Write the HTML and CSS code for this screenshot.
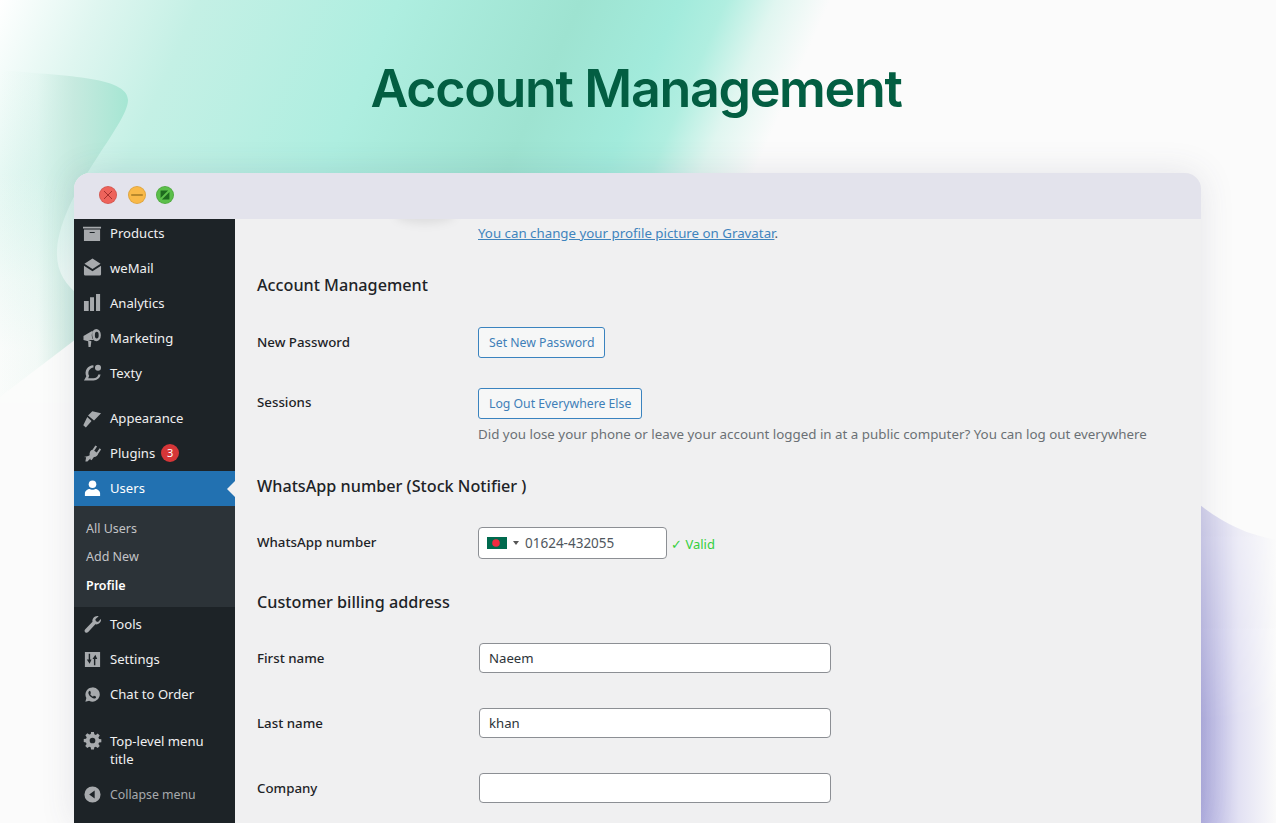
FILE: index.html
```html
<!DOCTYPE html>
<html lang="en">

<head>
    <meta charset="UTF-8">
    <meta name="viewport" content="width=device-width, initial-scale=1.0">
    <title>Account Management</title>
    <link rel="stylesheet" href="styles.css">
</head>

<body>
    <svg class="backdrop" viewBox="0 0 1276 823" preserveAspectRatio="none" aria-hidden="true">
        <defs>
            <linearGradient id="tealBand" gradientUnits="userSpaceOnUse" x1="0" y1="0" x2="695" y2="307">
                <stop offset="0" stop-color="#ffffff" />
                <stop offset="0.12" stop-color="#dff6f0" />
                <stop offset="0.24" stop-color="#c4f0e5" />
                <stop offset="0.48" stop-color="#aeeee0" />
                <stop offset="0.7" stop-color="#9ee3d1" />
                <stop offset="0.82" stop-color="#a2ebdc" />
                <stop offset="0.875" stop-color="#b0eee0" />
                <stop offset="0.935" stop-color="#e0f6f0" />
                <stop offset="1" stop-color="#fbfbfb" />
            </linearGradient>
            <linearGradient id="fadeLeft" gradientUnits="userSpaceOnUse" x1="0" y1="173" x2="0" y2="350">
                <stop offset="0" stop-color="#fbfcfb" stop-opacity="0" />
                <stop offset="0.6" stop-color="#fbfcfb" stop-opacity="0.72" />
                <stop offset="1" stop-color="#fbfcfb" stop-opacity="0.96" />
            </linearGradient>
            <linearGradient id="wave" gradientUnits="userSpaceOnUse" x1="0" y1="0" x2="128" y2="0">
                <stop offset="0" stop-color="#c4e8dc" stop-opacity="0" />
                <stop offset="0.29" stop-color="#c4e8dc" stop-opacity="0.12" />
                <stop offset="0.58" stop-color="#bfe6da" stop-opacity="0.75" />
                <stop offset="1" stop-color="#a5e6d3" />
            </linearGradient>
            <linearGradient id="violet" gradientUnits="userSpaceOnUse" x1="1201" y1="0" x2="1276" y2="0">
                <stop offset="0" stop-color="#b0aee0" />
                <stop offset="0.5" stop-color="#e2e1f3" />
                <stop offset="1" stop-color="#fafafa" />
            </linearGradient>
            <linearGradient id="violetV" gradientUnits="userSpaceOnUse" x1="0" y1="505" x2="0" y2="720">
                <stop offset="0" stop-color="#888888" />
                <stop offset="1" stop-color="#ffffff" />
            </linearGradient>
            <mask id="violetFade">
                <rect x="1200" y="500" width="76" height="323" fill="url(#violetV)" />
            </mask>
        </defs>
        <path d="M0 0H830V173L760 340H74L0 397Z" fill="url(#tealBand)" />
        <rect x="0" y="173" width="74" height="230" fill="url(#fadeLeft)" />
        <path d="M0 70C60 76 128 76 128 100C128 125 62 190 57 250C56 270 64 284 80 296V336L0 397Z" fill="url(#wave)" />
        <path d="M1200 505C1225 525 1250 535 1276 540V823H1200Z" fill="url(#violet)" mask="url(#violetFade)" />
    </svg>

    <h1 class="page-title">Account Management</h1>

    <div class="window">
        <div class="titlebar">
            <span class="dot dot-close">
                <svg viewBox="0 0 18 18"><path d="M4.500 4.500l9 9M13.500 4.500l-9 9" stroke="#9c2a26" stroke-width="1" /></svg>
            </span>
            <span class="dot dot-min">
                <svg viewBox="0 0 18 18"><path d="M2.500 9h13" stroke="#7a5a10" stroke-width="1.400" /></svg>
            </span>
            <span class="dot dot-max">
                <svg viewBox="0 0 18 18"><path d="M4 4h8.500L4 12.500zM14 5.500V14H5.500z" fill="#1d6a1e" /></svg>
            </span>
        </div>

        <div class="window-body">
            <nav class="sidebar">
                <ul class="menu">
                    <li class="menu-item">
                        <svg class="icon" viewBox="0 0 20 20"><path d="M0 4h19v1.800H0zM1 6.800h17V19H1zM7 9.500v1.100h5.300V9.500z" fill-rule="evenodd" /></svg>
                        Products
                    </li>
                    <li class="menu-item">
                        <svg class="icon" viewBox="0 0 20 20"><path d="M10 .500l8.500 5.500L10 11.500 1.500 6zM1 8.200l9 5.800 9-5.800V17a1.500 1.500 0 0 1-1.500 1.500h-15A1.500 1.500 0 0 1 1 17z" /></svg>
                        weMail
                    </li>
                    <li class="menu-item">
                        <svg class="icon" viewBox="0 0 20 20"><path d="M1 8.500h5V19H1zM7.400 4.500h4.200V19H7.400zM13.700 1H18v18h-4.300z" /></svg>
                        Analytics
                    </li>
                    <li class="menu-item">
                        <svg class="icon" viewBox="0 0 20 20"><path d="M.5 8.500L10 3c-.7 3-.4 6.500 1 9.500L5.500 12.500 8.800 14l-.8 6H5.800l-.4-6-4.900-1.500zM14 1a4.800 6.500 0 1 1 0 13 4.800 6.500 0 0 1 0-13zM14.500 4a2 3.500 0 1 0 0 7 2 3.500 0 0 0 0-7z" fill-rule="evenodd" /></svg>
                        Marketing
                    </li>
                    <li class="menu-item menu-item-last">
                        <svg class="icon" viewBox="0 0 20 20"><path d="M11 2.500A8 8 0 0 0 3.500 14L1 18.500h10a7.500 7.500 0 0 0 7.500-6.500h-2.400A5.300 5.300 0 0 1 11 16H5.500l1-2.500A5.700 5.700 0 0 1 11 4.800z" /><circle cx="15.800" cy="5" r="3.200" /></svg>
                        Texty
                    </li>
                    <li class="menu-item">
                        <svg class="icon" viewBox="0 0 20 20"><path d="M9.800 2.300L19 4.400 11.600 12 5.300 6.800zM4.500 8.500L9 12.500 3 19.500 .3 17z" /></svg>
                        Appearance
                    </li>
                    <li class="menu-item">
                        <svg class="icon" viewBox="0 0 20 20"><path d="M13 1.500l1.800 1.200-3 4.300 2.700 1.900 3-4.300 1.500 1.200-3 4.500c-.5 2-2.500 3.500-4.500 3.300l-2.500 3.500-1.500-1 .6-1.100-3.500 3.500H2.500l.8-4.500-2.300-.3 4.500-1 1.500-.8C6.500 8.500 8 6.500 10 6z" /></svg>
                        Plugins
                        <span class="badge">3</span>
                    </li>
                    <li class="menu-item menu-item-current">
                        <svg class="icon" viewBox="0 0 20 20"><circle cx="10" cy="5.500" r="4" /><path d="M2 18v-3c0-2.500 3-4.500 5-4.500 1 1 5 1 6 0 2 0 5 2 5 4.500v3z" /></svg>
                        Users
                    </li>
                    <li>
                        <ul class="submenu">
                            <li class="submenu-item">All Users</li>
                            <li class="submenu-item">Add New</li>
                            <li class="submenu-item submenu-item-current">Profile</li>
                        </ul>
                    </li>
                    <li class="menu-item">
                        <svg class="icon" viewBox="0 0 20 20"><path d="M19 5c0 3-3 5.500-6 4.800L5.500 18c-1 1-2.300 1-3.200.2-.9-.9-.9-2.300.1-3.200L10 7.200C9.300 4 12 1 15 1c.7 0 1 .1 1.500.3L13 4.500l.6 2.200 2.200.6 3-3.200c.1.300.2.600.2.900z" /></svg>
                        Tools
                    </li>
                    <li class="menu-item">
                        <svg class="icon" viewBox="0 0 20 20"><path d="M2 2h16v16H2zM6 4v6H4l3 4.500L9 10H7.500V4zM13 5l-3 4.500h1.500V16H13V9.500h2z" fill-rule="evenodd" /></svg>
                        Settings
                    </li>
                    <li class="menu-item menu-item-last">
                        <svg class="icon" viewBox="0 0 20 20"><path d="M10 2.500a7.500 7.500 0 0 0-6.500 11.200L2.500 17.500l3.900-1A7.500 7.500 0 1 0 10 2.500zM7.300 6c.5 0 .8 1.800 1 2.300 0 .6-.8 1-.6 1.400.5 1 1.500 2 2.700 2.500.5 0 .8-1 1.300-.8.500.1 2 .9 2.100 1.200 0 1.200-1.300 1.700-2.200 1.600C8.800 13.700 6 11 5.700 8.500 5.600 7.300 6.300 6 7.300 6z" fill-rule="evenodd" /></svg>
                        Chat to Order
                    </li>
                    <li class="menu-item menu-item-tall">
                        <svg class="icon" viewBox="0 0 20 20"><path d="M8.500 1h3l.4 2.400 1.600.7 2-1.400 2.100 2.100-1.400 2 .7 1.600 2.400.4v3l-2.400.4-.7 1.600 1.400 2-2.100 2.100-2-1.400-1.600.7-.4 2.400h-3l-.4-2.400-1.600-.7-2 1.400-2.100-2.100 1.400-2-.7-1.600L.8 11.500v-3l2.400-.4.7-1.600-1.400-2 2.100-2.100 2 1.400 1.600-.7zM10 7a3 3 0 1 0 0 6 3 3 0 0 0 0-6z" fill-rule="evenodd" /></svg>
                        <span class="menu-label-wrap">Top-level menu title</span>
                    </li>
                    <li class="menu-item menu-item-collapse">
                        <svg class="icon" viewBox="0 0 20 20"><path d="M10 1.500a8.500 8.500 0 1 0 0 17 8.500 8.500 0 0 0 0-17zM12.300 5.800v8.400L6.500 10z" fill-rule="evenodd" /></svg>
                        Collapse menu
                    </li>
                </ul>
            </nav>

            <main class="content">
                <div class="avatar-shadow"></div>
                <p class="gravatar"><a href="#">You can change your profile picture on Gravatar</a>.</p>

                <h2 class="section-title section-account">Account Management</h2>

                <div class="row row-password">
                    <div class="row-label">New Password</div>
                    <div class="row-field"><button class="btn" type="button">Set New Password</button></div>
                </div>
                <div class="row row-sessions">
                    <div class="row-label">Sessions</div>
                    <div class="row-field">
                        <button class="btn" type="button">Log Out Everywhere Else</button>
                        <p class="hint">Did you lose your phone or leave your account logged in at a public computer? You can log out everywhere</p>
                    </div>
                </div>

                <h2 class="section-title section-whatsapp">WhatsApp number (Stock Notifier )</h2>
                <div class="row row-phone">
                    <div class="row-label">WhatsApp number</div>
                    <div class="row-field phone-field">
                        <div class="phone-input">
                            <svg class="flag" viewBox="0 0 20 12"><rect width="20" height="12" fill="#006a4e" /><circle cx="9" cy="6" r="3.800" fill="#f42a41" /></svg>
                            <span class="caret"></span>
                            <span class="phone-number">01624-432055</span>
                        </div>
                        <span class="valid">✓ Valid</span>
                    </div>
                </div>

                <h2 class="section-title section-billing">Customer billing address</h2>
                <div class="row row-text">
                    <div class="row-label">First name</div>
                    <div class="row-field"><input class="text-input" type="text" value="Naeem"></div>
                </div>
                <div class="row row-text">
                    <div class="row-label">Last name</div>
                    <div class="row-field"><input class="text-input" type="text" value="khan"></div>
                </div>
                <div class="row row-text">
                    <div class="row-label">Company</div>
                    <div class="row-field"><input class="text-input" type="text"></div>
                </div>
            </main>
        </div>
    </div>
</body>

</html>
```

FILE: styles.css
```css
* {
    margin: 0;
    padding: 0;
    box-sizing: border-box;
}

body {
    position: relative;
    height: 823px;
    overflow: hidden;
    background-color: #fbfbfb;
    font-family: "Noto Sans", "Open Sans", sans-serif;
}

.backdrop {
    position: absolute;
    top: 0;
    left: 0;
    width: 100%;
    height: 100%;
}

.page-title {
    position: relative;
    padding-top: 57px;
    padding-right: 4px;
    height: 173px;
    text-align: center;
    font-family: Inter, sans-serif;
    font-size: 52px;
    line-height: 63px;
    font-weight: 600;
    letter-spacing: -1.33px;
    color: #035e42;
}

/* window */

.window {
    position: relative;
    width: 1127px;
    height: 650px;
    margin-left: 74px;
    border-radius: 16px 16px 0 0;
    overflow: hidden;
    background-color: #f0f0f1;
    box-shadow: 0 0 34px rgba(70, 70, 100, 0.13);
}

.titlebar {
    display: flex;
    align-items: center;
    gap: 10.500px;
    height: 46px;
    padding-left: 25px;
    padding-bottom: 2px;
    background-color: #e3e3ec;
}

.dot {
    display: block;
    width: 18px;
    height: 18px;
    border-radius: 50%;
    border: 1px solid rgba(0, 0, 0, 0.1);
}

.dot svg {
    display: block;
    width: 16px;
    height: 16px;
}

.dot-close {
    background-color: #ee635b;
}

.dot-min {
    background-color: #f9b948;
}

.dot-max {
    background-color: #5bbf4a;
}

.window-body {
    display: flex;
    height: 604px;
}

/* sidebar */

.sidebar {
    flex: none;
    width: 161px;
    overflow: hidden;
    background-color: #1d2327;
    color: #f0f0f1;
    font-size: 13.100px;
}

.menu {
    list-style: none;
    margin-top: -4px;
}

.menu-item {
    position: relative;
    display: flex;
    align-items: center;
    height: 35px;
    padding-left: 36px;
}

.menu-item-last {
    margin-bottom: 10.500px;
}

.menu-item .icon {
    position: absolute;
    left: 9px;
    top: 8px;
    width: 19px;
    height: 19px;
    fill: #a7aaad;
}

.badge {
    display: inline-block;
    width: 18px;
    height: 18px;
    margin-left: 6px;
    border-radius: 50%;
    background-color: #d63638;
    color: #fff;
    font-size: 11px;
    line-height: 18px;
    text-align: center;
}

.menu-item-current {
    background-color: #2271b1;
    color: #fff;
}

.menu-item-current .icon {
    fill: #fff;
}

.menu-item-current::after {
    content: "";
    position: absolute;
    right: 0;
    top: 10px;
    border: 8px solid transparent;
    border-right-color: #f0f0f1;
    border-left-width: 0;
}

.submenu {
    list-style: none;
    height: 101px;
    padding-top: 9px;
    background-color: #2c3338;
    color: #c3c4c7;
    font-size: 12.500px;
}

.submenu-item {
    height: 28.500px;
    padding-left: 12px;
    line-height: 28px;
}

.submenu-item-current {
    color: #fff;
    font-weight: 600;
}

.menu-item-tall {
    height: 55px;
    line-height: 18px;
}

.menu-item-tall .icon {
    top: 9px;
}

.menu-label-wrap {
    max-width: 104px;
}

.menu-item-collapse {
    color: #a7aaad;
    font-size: 12.300px;
}

/* main */

.content {
    position: relative;
    flex: 1;
    padding-left: 22px;
    color: #1d2327;
    font-size: 13.300px;
    overflow: hidden;
}

.avatar-shadow {
    position: absolute;
    left: 160px;
    top: -13px;
    width: 60px;
    height: 18px;
    border-radius: 50%;
    background-color: rgba(0, 0, 0, 0.07);
    filter: blur(4px);
}

.gravatar {
    padding-left: 221px;
    padding-top: 4px;
    line-height: 20px;
    color: #50575e;
}

.gravatar a {
    color: #3f84bd;
}

.section-title {
    font-size: 16.200px;
    line-height: 24px;
    font-weight: 500;
    color: #1d2327;
}

.section-account {
    margin-top: 30px;
}

.section-whatsapp {
    margin-top: 30px;
}

.section-billing {
    margin-top: 31px;
}

.row {
    display: flex;
}

.row-label {
    flex: none;
    width: 221px;
    font-weight: 500;
}

.row-password {
    margin-top: 30px;
    align-items: center;
}

.row-password .row-label,
.row-phone .row-label {
    margin-bottom: 2px;
}

.row-sessions {
    margin-top: 30px;
}

.row-sessions .row-label {
    padding-top: 5px;
}

.row-phone {
    margin-top: 29px;
    align-items: center;
}

.row-text {
    align-items: center;
    height: 30px;
    margin-bottom: 35px;
}

.section-billing + .row-text {
    margin-top: 29px;
}

.btn {
    display: block;
    height: 31px;
    padding: 0 10px;
    border: 1px solid #3a83bf;
    border-radius: 3px;
    background-color: #f6f7f7;
    color: #3f7fb8;
    font-family: inherit;
    font-size: 12.250px;
}

.hint {
    margin-top: 5px;
    line-height: 20px;
    color: #6b7075;
    font-size: 13.350px;
    white-space: nowrap;
}

.phone-field {
    display: flex;
    align-items: center;
    gap: 4px;
}

.phone-input {
    display: flex;
    align-items: center;
    width: 189px;
    height: 32px;
    padding-left: 8px;
    border: 1px solid #8c8f94;
    border-radius: 4px;
    background-color: #fff;
    color: #50575e;
    font-size: 13.500px;
}

.flag {
    width: 20px;
    height: 12px;
}

.caret {
    margin-left: 6px;
    margin-right: 6px;
    border-top: 4px solid #555;
    border-left: 3px solid transparent;
    border-right: 3px solid transparent;
}

.valid {
    margin-top: 2px;
    color: #35cf3d;
    font-size: 13px;
}

.text-input {
    display: block;
    width: 352px;
    height: 30px;
    margin-left: 1px;
    padding: 0 9px;
    border: 1px solid #8c8f94;
    border-radius: 4px;
    background-color: #fff;
    color: #2c3338;
    font-family: inherit;
    font-size: 13.200px;
}
```
